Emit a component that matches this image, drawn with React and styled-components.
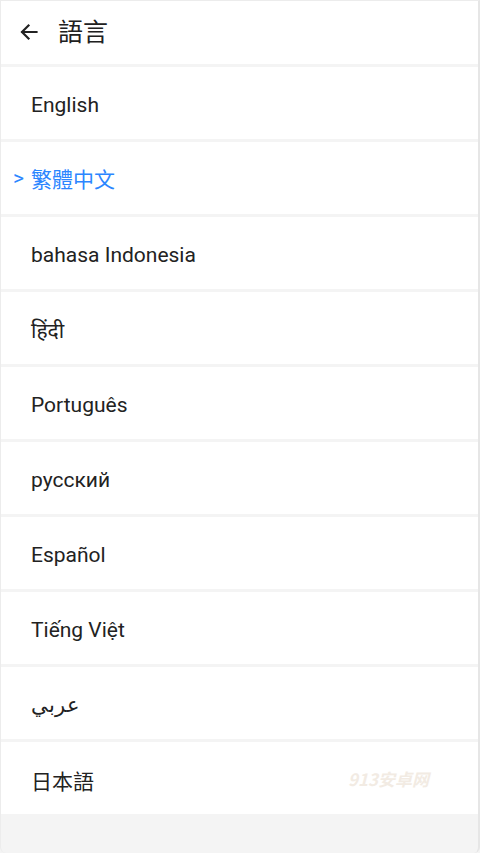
import styled, { createGlobalStyle } from "styled-components"

const GlobalStyle = createGlobalStyle`
  html, body {
    margin: 0;
    padding: 0;
    background: #f4f4f4;
  }
  body {
    font-family: Roboto, "Noto Sans", "Noto Sans CJK TC", sans-serif;
    -webkit-font-smoothing: antialiased;
  }
`

const Screen = styled.div`
  width: 480px;
  height: 853px;
  box-sizing: border-box;
  display: flex;
  flex-direction: column;
  background: #f4f4f4;
  border-top: 1px solid #ececec;
  border-left: 1px solid #ececec;
  border-right: 2px solid #e6e6e6;
  border-radius: 0 0 6px 6px;
  overflow: hidden;
`

const Header = styled.header`
  height: 63px;
  display: flex;
  align-items: center;
  background: #fff;
  padding-left: 17px;
  gap: 18px;
  margin-bottom: 3px;
`

const BackButton = styled.button`
  border: none;
  background: none;
  padding: 0;
  width: 22px;
  height: 22px;
  margin-top: -2px;
  display: flex;
  align-items: center;
  justify-content: center;
  cursor: pointer;
`

const Title = styled.h1`
  margin: -5px 0 0;
  font-size: 25px;
  line-height: 1;
  font-weight: 400;
  color: #202020;
  font-family: "Noto Sans CJK TC", sans-serif;
`

const List = styled.ul`
  list-style: none;
  margin: 0;
  padding: 0;
  display: flex;
  flex-direction: column;
  gap: 3px;
`

const Row = styled.li`
  position: relative;
  height: 72px;
  box-sizing: border-box;
  padding-top: ${p => (p.$active ? "0" : "3px")};
  display: flex;
  align-items: center;
  background: #fff;
  padding-left: ${p => (p.$active ? "12px" : "30px")};
  font-size: 21px;
  color: ${p => (p.$active ? "#2b86ff" : "#222")};
  font-family: Roboto, "Noto Sans", "Noto Sans CJK TC", sans-serif;
`

const Marker = styled.span`
  font-size: 21px;
  margin-right: 7px;
`

const Watermark = styled.span`
  position: absolute;
  left: 347px;
  top: 50%;
  transform: translateY(-50%);
  font-size: 17px;
  font-weight: 700;
  font-style: italic;
  color: #f2ebe3;
  font-family: "Noto Sans CJK SC", sans-serif;
`

const languages = [
  "English",
  "繁體中文",
  "bahasa Indonesia",
  "हिंदी",
  "Português",
  "русский",
  "Español",
  "Tiếng Việt",
  "عربي",
  "日本語",
]

export default function App() {
  return (
    <>
      <GlobalStyle />
      <Screen>
        <Header>
          <BackButton aria-label="back">
            <svg width="20" height="20" viewBox="0 0 20 20" fill="none" stroke="#222" strokeWidth="2.2" strokeLinecap="square">
              <path d="M17.5 10H3.5" />
              <path d="M9.5 3.5L3 10l6.5 6.5" />
            </svg>
          </BackButton>
          <Title>語言</Title>
        </Header>
        <List>
          {languages.map(lang => {
            const active = lang === "繁體中文"
            return (
              <Row key={lang} $active={active}>
                {active && <Marker>&gt;</Marker>}
                {lang}
                {lang === "日本語" && <Watermark>913安卓网</Watermark>}
              </Row>
            )
          })}
        </List>
      </Screen>
    </>
  )
}
